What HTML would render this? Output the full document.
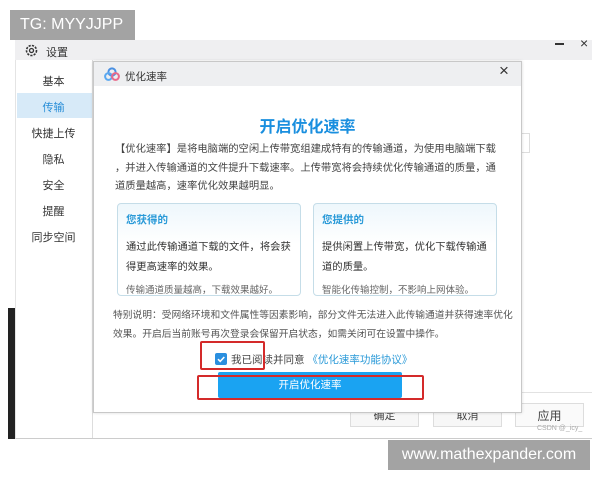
<!DOCTYPE html>
<html><head><meta charset="utf-8"><style>
*{margin:0;padding:0;box-sizing:border-box}
body{width:600px;height:480px;background:#fff;position:relative;overflow:hidden;font-family:"Liberation Sans","Noto Sans CJK SC",sans-serif;color:#333}
.a{position:absolute;white-space:nowrap}
.side{font-size:11px;color:#333;width:77px;text-align:center;left:15px}
.box{position:absolute;top:203px;width:184px;height:93px;border:1px solid #c5dde8;border-radius:4px;background:linear-gradient(#eef7fc,#fff 40px)}
.bt{position:absolute;font-size:10.5px;font-weight:bold;color:#2a9ad8;left:8px;top:8px}
.bx{position:absolute;left:8px;top:34px;font-size:10.3px;line-height:20px;color:#333;white-space:nowrap}
.bs{position:absolute;left:8px;top:78px;font-size:9.5px;color:#666;white-space:nowrap}
.btn2{position:absolute;top:403px;width:69px;height:24px;border:1px solid #ddd;background:#f7f7f7;font-size:11px;text-align:center;line-height:24px;color:#444}
</style></head><body>
<div class="a" style="left:10px;top:10px;width:125px;height:30px;background:#a3a3a3;color:#fff;font-size:16px;line-height:30px;padding-left:10px">TG: MYYJJPP</div>
<div class="a" style="left:15px;top:40px;width:577px;height:399px;background:#fff;border-bottom:1px solid #ccc;border-left:1px solid #e4e4e4"></div>
<div class="a" style="left:15px;top:40px;width:577px;height:20px;background:#efeff1"></div>
<svg class="a" style="left:25px;top:44px" width="13" height="13" viewBox="0 0 13 13"><circle cx="6.5" cy="6.5" r="5" fill="none" stroke="#333" stroke-width="1.6" stroke-dasharray="2.2 1.2"/><circle cx="6.5" cy="6.5" r="2" fill="none" stroke="#333" stroke-width="1.3"/></svg>
<div class="a" style="left:46px;top:44px;font-size:11px">设置</div>
<div class="a" style="left:555px;top:43px;width:9px;height:2px;background:#333"></div>
<div class="a" style="left:580px;top:35px;font-size:14px;color:#333">×</div>
<div class="a" style="left:92px;top:60px;width:1px;height:378px;background:#ddd"></div>
<div class="a" style="left:17px;top:93px;width:75px;height:25px;background:#d7eaf8"></div>
<div class="a side" style="top:73px">基本</div>
<div class="a side" style="top:99px;color:#2a8fd8">传输</div>
<div class="a side" style="top:125px">快捷上传</div>
<div class="a side" style="top:151px">隐私</div>
<div class="a side" style="top:177px">安全</div>
<div class="a side" style="top:203px">提醒</div>
<div class="a side" style="top:229px">同步空间</div>
<div class="a" style="left:8px;top:308px;width:7px;height:131px;background:#222"></div>
<div class="a" style="left:522px;top:133px;width:8px;height:20px;border:1px solid #ddd;border-left:none"></div>
<div class="a" style="left:522px;top:392px;width:70px;height:1px;background:#e2e2e2"></div>
<div class="btn2" style="left:350px">确定</div>
<div class="btn2" style="left:433px">取消</div>
<div class="btn2" style="left:515px;font-size:12px;background:#fafafa">应用</div>
<div class="a" style="left:537px;top:425px;font-size:7px;color:#aaa">CSDN @_icy_</div>
<div class="a" style="left:93px;top:61px;width:429px;height:352px;background:#fff;border:1px solid #c8c8c8;box-shadow:0 0 3px rgba(0,0,0,.15)"></div>
<div class="a" style="left:94px;top:62px;width:427px;height:24px;background:#eeeff1"></div>
<svg class="a" style="left:104px;top:67px" width="16" height="14" viewBox="0 0 16 14"><circle cx="8" cy="5" r="3.6" fill="none" stroke="#4a90e2" stroke-width="2"/><circle cx="4.5" cy="9.5" r="3.4" fill="none" stroke="#5aa8f0" stroke-width="2"/><circle cx="11.5" cy="9.5" r="3.4" fill="none" stroke="#e86a8a" stroke-width="2"/></svg>
<div class="a" style="left:125px;top:69px;font-size:10.5px">优化速率</div>
<div class="a" style="left:499px;top:61px;font-size:17px;color:#333">×</div>
<div class="a" style="left:93px;width:429px;top:113px;text-align:center;font-size:16px;font-weight:bold;color:#1a8fdf">开启优化速率</div>
<div class="a" style="left:115px;top:141px;font-size:10.3px;line-height:18.5px;color:#444">【优化速率】是将电脑端的空闲上传带宽组建成特有的传输通道，为使用电脑端下载<br>，并进入传输通道的文件提升下载速率。上传带宽将会持续优化传输通道的质量，通<br>道质量越高，速率优化效果越明显。</div>
<div class="box" style="left:117px"><div class="bt">您获得的</div><div class="bx">通过此传输通道下载的文件，将会获<br>得更高速率的效果。</div><div class="bs">传输通道质量越高，下载效果越好。</div></div>
<div class="box" style="left:313px"><div class="bt">您提供的</div><div class="bx">提供闲置上传带宽，优化下载传输通<br>道的质量。</div><div class="bs">智能化传输控制，不影响上网体验。</div></div>
<div class="a" style="left:113px;top:306px;font-size:9.75px;line-height:19px;color:#555">特别说明：受网络环境和文件属性等因素影响，部分文件无法进入此传输通道并获得速率优化<br>效果。开启后当前账号再次登录会保留开启状态，如需关闭可在设置中操作。</div>
<div class="a" style="left:215px;top:353px;width:12px;height:12px;background:#2a8fdf;border-radius:2px"></div>
<svg class="a" style="left:215px;top:353px" width="12" height="12"><path d="M3 6.2l2.2 2.2L9.3 4" fill="none" stroke="#fff" stroke-width="1.6"/></svg>
<div class="a" style="left:231px;top:352px;font-size:10.5px;color:#444">我已阅读并同意 <span style="color:#2a9ad8">《优化速率功能协议》</span></div>
<div class="a" style="left:218px;top:372px;width:184px;height:26px;background:#1aa3f2;border-radius:2px;color:#fff;font-size:10.5px;text-align:center;line-height:26px">开启优化速率</div>
<div class="a" style="left:200px;top:341px;width:65px;height:29px;border:2px solid #d42a2a;border-radius:2px"></div>
<div class="a" style="left:197px;top:375px;width:227px;height:25px;border:2px solid #d42a2a;border-radius:2px"></div>
<div class="a" style="left:388px;top:440px;width:202px;height:30px;background:#a3a3a3;color:#fff;font-size:16px;line-height:30px;text-align:center">www.mathexpander.com</div>
</body></html>
